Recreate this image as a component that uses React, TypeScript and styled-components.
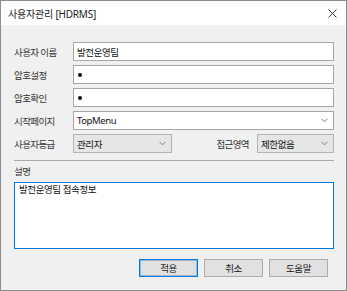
import styled, { createGlobalStyle } from 'styled-components';

const GlobalStyle = createGlobalStyle`
  html, body {
    margin: 0;
    padding: 0;
    background: #f0f0f0;
  }
  body {
    font-family: "Noto Sans", "Noto Sans CJK KR", sans-serif;
    font-size: 9.5px;
    color: #1e1e1e;
  }
`;

const Chevron = () => (
  <svg width="7" height="5" viewBox="0 0 7 5">
    <polyline points="0.5,0.8 3.5,3.8 6.5,0.8" fill="none" stroke="#707070" strokeWidth="0.9" />
  </svg>
);

const CloseIcon = () => (
  <svg width="9" height="9" viewBox="0 0 9 9">
    <path d="M0.5 0.5 L8.5 8.5 M8.5 0.5 L0.5 8.5" stroke="#333" strokeWidth="1" />
  </svg>
);

const App = () => {
  return (
    <>
      <GlobalStyle />
      <Window>
        <TitleBar>
          <span>사용자관리 [HDRMS]</span>
          <CloseIcon />
        </TitleBar>
        <Body>
          <Form>
            <Row>
              <Label>사용자 이름</Label>
              <Field>발전운영팀</Field>
            </Row>
            <Row>
              <Label>암호설정</Label>
              <Field>
                <Dot />
              </Field>
            </Row>
            <Row>
              <Label>암호확인</Label>
              <Field>
                <Dot />
              </Field>
            </Row>
            <Row>
              <Label>시작페이지</Label>
              <Field>
                <span>TopMenu</span>
                <Chevron />
              </Field>
            </Row>
            <Row>
              <Label>사용자등급</Label>
              <Field $gray $width={99}>
                <span>관리자</span>
                <Chevron />
              </Field>
              <Spacer />
              <SideLabel>접근영역</SideLabel>
              <Field $gray $width={77}>
                <span>제한없음</span>
                <Chevron />
              </Field>
            </Row>
          </Form>
          <Separator />
          <SectionLabel>설명</SectionLabel>
          <TextArea>발전운영팀 접속정보</TextArea>
          <Buttons>
            <Button $primary>적용</Button>
            <Button>취소</Button>
            <Button>도움말</Button>
          </Buttons>
        </Body>
      </Window>
    </>
  );
};

const Window = styled.div`
  width: 347px;
  height: 291px;
  box-sizing: border-box;
  border: 1px solid #8c8c8c;
  background: #f0f0f0;
  display: flex;
  flex-direction: column;
`;

const TitleBar = styled.div`
  height: 24px;
  flex-shrink: 0;
  background: #fff;
  display: flex;
  align-items: center;
  justify-content: space-between;
  padding: 0 9px 0 7px;
  font-size: 10px;
  letter-spacing: -0.2px;
  color: #1a1a1a;
`;

const Body = styled.div`
  flex: 1;
  padding: 17px 12px 0 13px;
  display: flex;
  flex-direction: column;
`;

const Form = styled.div`
  display: flex;
  flex-direction: column;
  gap: 4px;
`;

const Row = styled.div`
  display: flex;
  align-items: center;
  height: 19px;
`;

const Label = styled.div`
  width: 59px;
  flex-shrink: 0;
  letter-spacing: -0.6px;
  color: #333;
`;

const SideLabel = styled.div`
  margin-right: 8px;
  letter-spacing: -0.6px;
  color: #333;
`;

const Spacer = styled.div`
  flex: 1;
`;

const Field = styled.div<{ $gray?: boolean; $width?: number }>`
  box-sizing: border-box;
  height: 19px;
  ${(p) => (p.$width ? `width: ${p.$width}px;` : 'flex: 1;')}
  border: 1px solid ${(p) => (p.$gray ? '#b4b4b4' : '#a6a6a6')};
  background: ${(p) => (p.$gray ? '#e6e6e6' : '#fff')};
  padding: 0 5px 0 3px;
  display: flex;
  align-items: center;
  justify-content: space-between;
  color: #111;
  letter-spacing: -0.4px;
`;

const Dot = styled.span`
  width: 4px;
  height: 4px;
  margin-left: 1px;
  border-radius: 50%;
  background: #000;
`;

const Separator = styled.div`
  margin-top: 7px;
  height: 1px;
  background: #a9a9a9;
`;

const SectionLabel = styled.div`
  margin-top: 5px;
  height: 12px;
  line-height: 12px;
  letter-spacing: -0.6px;
  color: #333;
`;

const TextArea = styled.div`
  margin-top: 4px;
  height: 67px;
  box-sizing: border-box;
  border: 1px solid #0078d7;
  background: #fff;
  padding: 1px 4px;
  line-height: 12px;
  letter-spacing: -0.4px;
  color: #111;
`;

const Buttons = styled.div`
  margin-top: 10px;
  display: flex;
  justify-content: flex-end;
  gap: 6px;
  padding-right: 6px;
`;

const Button = styled.div<{ $primary?: boolean }>`
  width: 59px;
  height: 18px;
  box-sizing: border-box;
  display: flex;
  align-items: center;
  justify-content: center;
  background: #e1e1e1;
  border: 1px solid ${(p) => (p.$primary ? '#0078d7' : '#adadad')};
  box-shadow: ${(p) => (p.$primary ? 'inset 0 0 0 1px rgba(0, 120, 215, 0.35)' : 'none')};
  color: #1a1a1a;
  letter-spacing: -0.4px;
`;

export default App;
